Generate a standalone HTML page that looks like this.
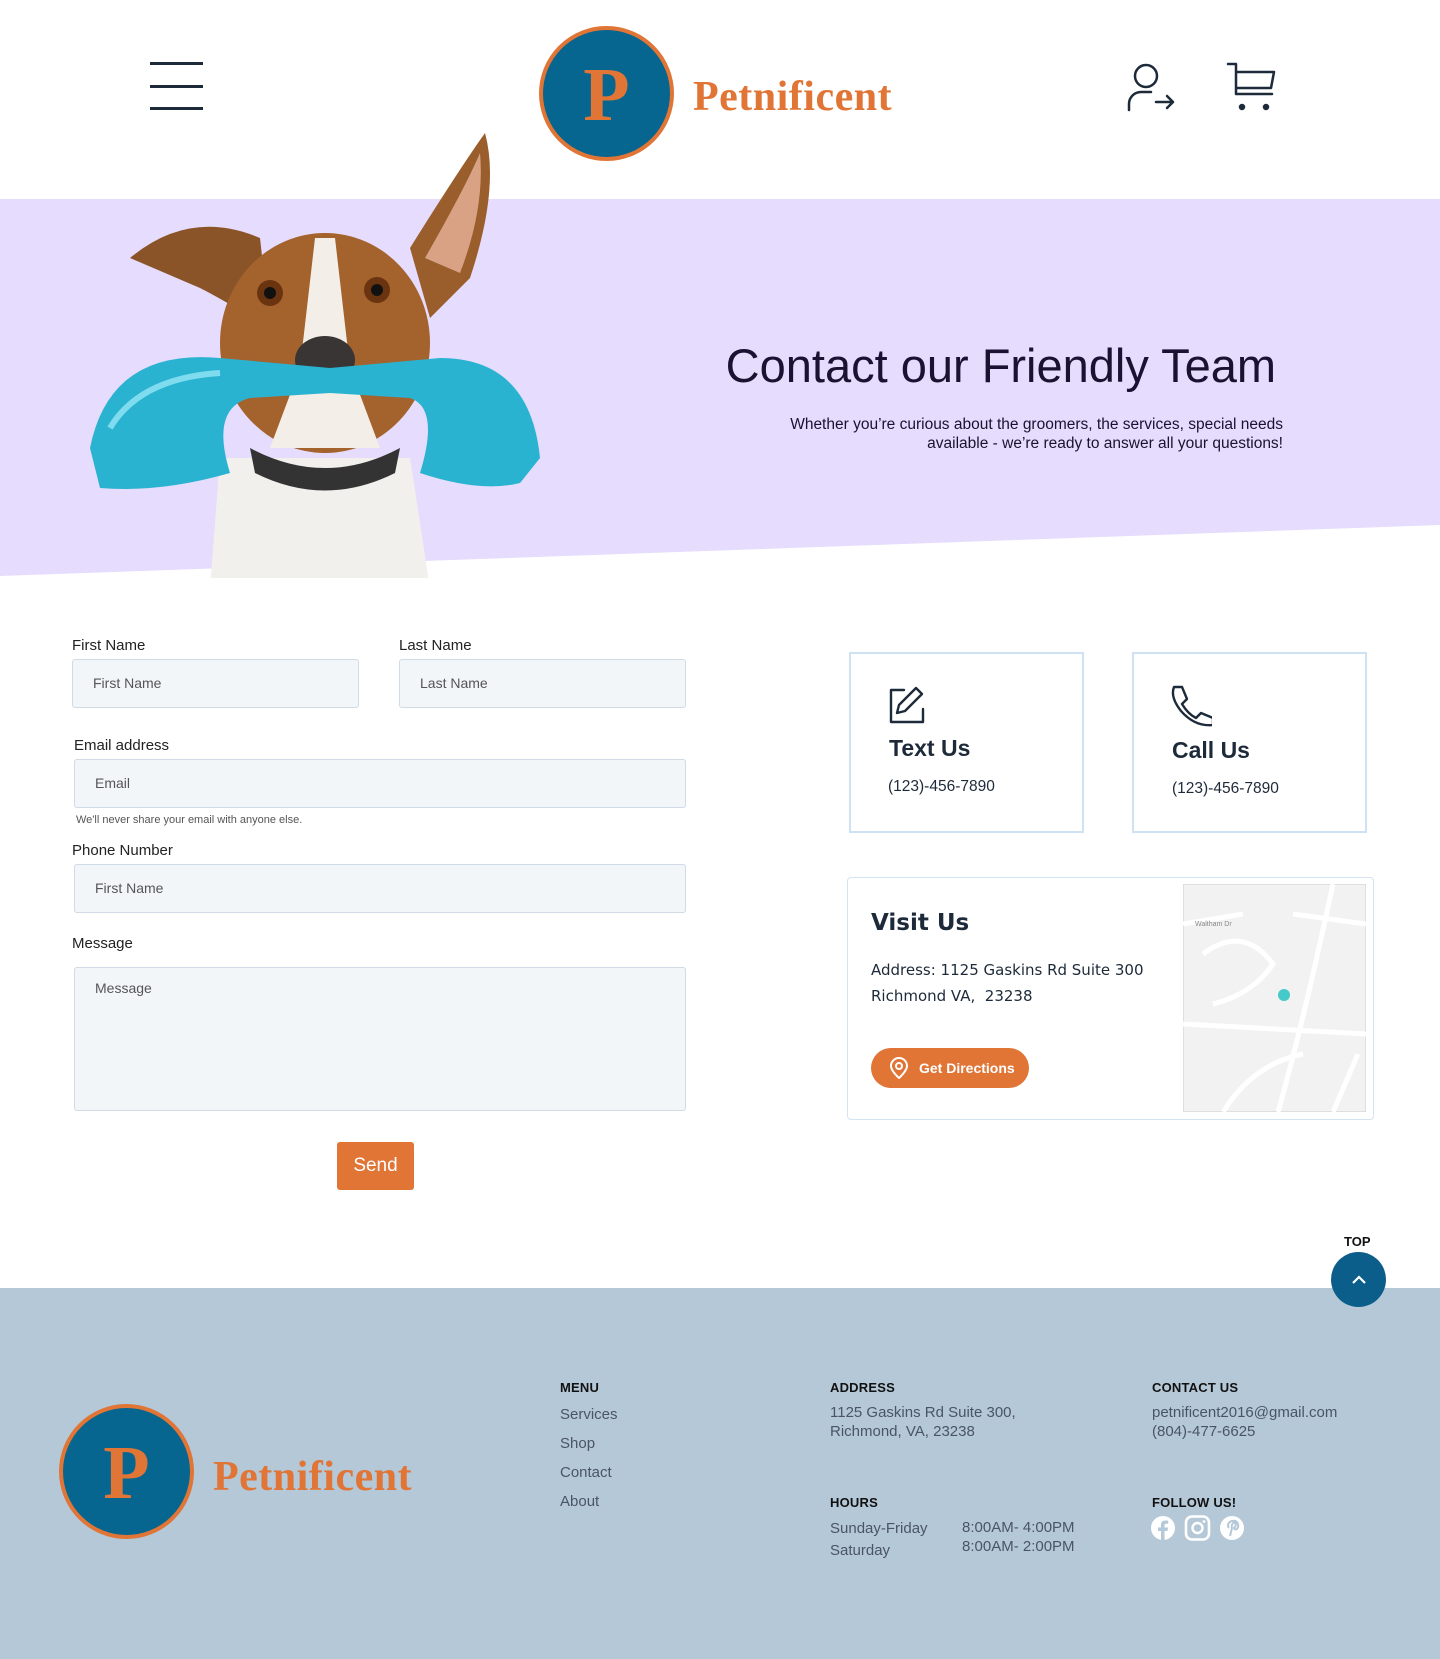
<!DOCTYPE html>
<html><head><meta charset="utf-8"><style>
*{margin:0;padding:0;box-sizing:border-box}
body{width:1440px;height:1659px;position:relative;background:#fff;font-family:"Liberation Sans",sans-serif;overflow:hidden;color:#1d1d2b}
.a{position:absolute}
.lbl{font-size:15px;color:#222}
.inp{position:absolute;background:#f3f6f9;border:1px solid #cfdbe6;border-radius:3px;font-size:14px;color:#555;padding-left:20px;line-height:46px}
.card{position:absolute;border:2px solid #cfe2f3;background:#fff}
.ft{font-size:13px;font-weight:bold;color:#111;letter-spacing:.2px}
.fl{font-size:15px;color:#4a5563}
</style></head><body>
<!-- header -->
<div class="a" style="left:150px;top:62px;width:53px;height:3px;background:#1d2a3a"></div>
<div class="a" style="left:150px;top:85px;width:53px;height:3px;background:#1d2a3a"></div>
<div class="a" style="left:150px;top:107px;width:53px;height:3px;background:#1d2a3a"></div>
<svg class="a" style="left:1126px;top:62px" width="52" height="52" viewBox="0 0 52 52" fill="none" stroke="#1d2a3a" stroke-width="2.5" stroke-linecap="round" stroke-linejoin="round"><circle cx="20" cy="14" r="11"/><path d="M3 48v-6a12 12 0 0 1 12-12h10"/><path d="M30 40h17M41 34l6 6-6 6"/></svg>
<svg class="a" style="left:1226px;top:62px" width="52" height="52" viewBox="0 0 52 52" fill="none" stroke="#1d2a3a" stroke-width="2.5" stroke-linecap="round" stroke-linejoin="round"><path d="M2 2h8v30h36M10 10h38l-3 16H10"/><circle cx="16" cy="45" r="2" fill="#1d2a3a"/><circle cx="40" cy="45" r="2" fill="#1d2a3a"/></svg>
<!-- hero band -->
<svg class="a" style="left:0;top:199px" width="1440" height="380"><polygon points="0,0 1440,0 1440,326 0,377" fill="#e6dcfd"/></svg>
<!-- dog -->
<svg class="a" style="left:80px;top:128px" width="480" height="450" viewBox="0 0 480 450">
<path d="M130 460 L140 330 L330 330 L350 460Z" fill="#f2f0ec"/>
<path d="M50 130 Q110 80 180 110 L190 200 Q140 170 120 160 Z" fill="#8a5428"/>
<path d="M330 120 Q380 40 405 5 Q420 60 390 150 L350 190Z" fill="#9a5e2c"/>
<path d="M345 130 Q385 60 400 25 Q405 80 380 145Z" fill="#d9a284"/>
<ellipse cx="245" cy="215" rx="105" ry="110" fill="#a4622c"/>
<path d="M235 110 L255 110 L270 240 L300 320 L190 320 L220 240Z" fill="#f3efe8"/>
<circle cx="190" cy="165" r="13" fill="#6b3410"/><circle cx="297" cy="162" r="13" fill="#6b3410"/>
<circle cx="190" cy="165" r="6" fill="#111"/><circle cx="297" cy="162" r="6" fill="#111"/>
<ellipse cx="245" cy="232" rx="30" ry="24" fill="#3a3535"/>
<path d="M170 320 Q245 360 320 320 L315 345 Q245 380 175 345Z" fill="#333"/>
<path d="M10 320 Q30 220 140 230 L250 240 L360 230 Q450 230 460 330 L440 355 Q400 365 340 345 Q360 280 330 270 L250 265 L170 270 Q130 280 150 345 Q80 365 20 360Z" fill="#2ab3d1"/>
<path d="M30 300 Q60 250 140 245" stroke="#7fdcef" stroke-width="6" fill="none"/>
</svg>
<div class="a" style="right:164px;top:338px;font-size:47px;color:#1a1230;white-space:nowrap">Contact our Friendly Team</div>
<div class="a" style="right:157px;top:415px;font-size:15.5px;line-height:19px;color:#1a1230;text-align:right;width:500px">Whether you’re curious about the groomers, the services, special needs available - we’re ready to answer all your questions!</div>
<!-- logo -->
<div class="a" style="left:539px;top:26px;width:135px;height:135px;border-radius:50%;background:#06668f;border:4px solid #e07535"></div>
<div class="a" style="left:539px;top:50px;width:135px;text-align:center;font-family:'Liberation Serif',serif;font-weight:bold;font-size:76px;line-height:90px;color:#e07535">P</div>
<div class="a" style="left:693px;top:73px;font-family:'Liberation Serif',serif;font-weight:bold;font-size:42px;color:#e07535;letter-spacing:.5px">Petnificent</div>
<!-- form -->
<div class="a lbl" style="left:72px;top:637px">First Name</div>
<div class="inp" style="left:72px;top:659px;width:287px;height:49px">First Name</div>
<div class="a lbl" style="left:399px;top:637px">Last Name</div>
<div class="inp" style="left:399px;top:659px;width:287px;height:49px">Last Name</div>
<div class="a lbl" style="left:74px;top:737px">Email address</div>
<div class="inp" style="left:74px;top:759px;width:612px;height:49px">Email</div>
<div class="a" style="left:76px;top:814px;font-size:11px;color:#555">We'll never share your email with anyone else.</div>
<div class="a lbl" style="left:72px;top:842px">Phone Number</div>
<div class="inp" style="left:74px;top:864px;width:612px;height:49px">First Name</div>
<div class="a lbl" style="left:72px;top:935px">Message</div>
<div class="inp" style="left:74px;top:967px;width:612px;height:144px;line-height:40px">Message</div>
<div class="a" style="left:337px;top:1142px;width:77px;height:48px;background:#e07535;border-radius:3px;color:#fff;font-size:19px;text-align:center;line-height:48px">Send</div>
<!-- cards -->
<div class="card" style="left:849px;top:652px;width:235px;height:181px"></div>
<svg class="a" style="left:886px;top:685px" width="40" height="40" viewBox="0 0 40 40" fill="none" stroke="#1d2a3a" stroke-width="2.4" stroke-linecap="round" stroke-linejoin="round"><path d="M18 5H5v32h32V24"/><path d="M30 3l6 6-17 17-8 2 2-8z"/></svg>
<div class="a" style="left:889px;top:735px;font-size:23px;font-weight:bold;color:#1d2a3a">Text Us</div>
<div class="a" style="left:888px;top:778px;font-size:15.5px;color:#1d2a3a">(123)-456-7890</div>
<div class="card" style="left:1132px;top:652px;width:235px;height:181px"></div>
<svg class="a" style="left:1170px;top:683px" width="42" height="44" viewBox="0 0 42 44" fill="none" stroke="#1d2a3a" stroke-width="2.4" stroke-linecap="round" stroke-linejoin="round"><path d="M4 4h8l5 12-5 5q6 10 14 14l5-5 12 5v7q-18 2-32-14Q0 14 4 4z"/></svg>
<div class="a" style="left:1172px;top:737px;font-size:23px;font-weight:bold;color:#1d2a3a">Call Us</div>
<div class="a" style="left:1172px;top:780px;font-size:15.5px;color:#1d2a3a">(123)-456-7890</div>
<div class="a" style="left:847px;top:877px;width:527px;height:243px;border:1.5px solid #d4e3f1;border-radius:4px"></div>
<div class="a" style="left:871px;top:910px;font-family:'DejaVu Sans',sans-serif;font-weight:bold;font-size:23px;color:#1d2a3a">Visit Us</div>
<div class="a" style="left:871px;top:957px;font-family:'DejaVu Sans',sans-serif;font-size:15px;line-height:26px;color:#1d2a3a">Address: 1125 Gaskins Rd Suite 300<br>Richmond VA,&nbsp; 23238</div>
<div class="a" style="left:871px;top:1048px;width:158px;height:40px;border-radius:20px;background:#e07535;color:#fff;font-size:14px;font-weight:bold;line-height:40px;padding-left:48px">Get Directions</div>
<svg class="a" style="left:888px;top:1057px" width="22" height="22" viewBox="0 0 22 22" fill="none" stroke="#fff" stroke-width="2"><path d="M11 21s-8-7-8-12a8 8 0 0 1 16 0c0 5-8 12-8 12z"/><circle cx="11" cy="9" r="3"/></svg>
<svg class="a" style="left:1183px;top:884px" width="183" height="228" viewBox="0 0 183 228"><rect width="183" height="228" fill="#f2f2f2" stroke="#ccc"/><g stroke="#fff" stroke-width="5" fill="none"><path d="M0 140 L183 150"/><path d="M95 228 Q120 140 150 0"/><path d="M20 70 Q60 40 90 80 Q70 110 30 120"/><path d="M110 30 L183 40"/><path d="M40 228 Q70 180 120 170"/><path d="M0 40 L60 30"/><path d="M150 228 L175 170"/></g><circle cx="101" cy="111" r="6" fill="#46c9c9"/><text x="12" y="42" font-size="7" fill="#888" font-family="Liberation Sans">Waltham Dr</text></svg>
<!-- footer -->
<div class="a" style="left:0;top:1288px;width:1440px;height:371px;background:#b5c8d8"></div>
<div class="a" style="left:1344px;top:1234px;font-size:13px;font-weight:bold;color:#111">TOP</div>
<div class="a" style="left:1331px;top:1252px;width:55px;height:55px;border-radius:50%;background:#0b5e8a"></div>
<svg class="a" style="left:1349px;top:1270px" width="20" height="20" viewBox="0 0 20 20" fill="none" stroke="#fff" stroke-width="2.2"><path d="M4 13l6-6 6 6"/></svg>
<div class="a" style="left:59px;top:1404px;width:135px;height:135px;border-radius:50%;background:#06668f;border:4px solid #e07535"></div>
<div class="a" style="left:59px;top:1428px;width:135px;text-align:center;font-family:'Liberation Serif',serif;font-weight:bold;font-size:76px;line-height:90px;color:#e07535">P</div>
<div class="a" style="left:213px;top:1453px;font-family:'Liberation Serif',serif;font-weight:bold;font-size:42px;color:#e07535;letter-spacing:.5px">Petnificent</div>
<div class="a ft" style="left:560px;top:1380px">MENU</div>
<div class="a fl" style="left:560px;top:1400px;line-height:29px">Services<br>Shop<br>Contact<br>About</div>
<div class="a ft" style="left:830px;top:1380px">ADDRESS</div>
<div class="a fl" style="left:830px;top:1403px;line-height:19px">1125 Gaskins Rd Suite 300,<br>Richmond, VA, 23238</div>
<div class="a ft" style="left:830px;top:1495px">HOURS</div>
<div class="a fl" style="left:830px;top:1518px;line-height:22px">Sunday-Friday<br>Saturday</div>
<div class="a fl" style="left:962px;top:1518px;line-height:19px">8:00AM- 4:00PM<br>8:00AM- 2:00PM</div>
<div class="a ft" style="left:1152px;top:1380px">CONTACT US</div>
<div class="a fl" style="left:1152px;top:1403px;line-height:19px">petnificent2016@gmail.com<br>(804)-477-6625</div>
<div class="a ft" style="left:1152px;top:1495px">FOLLOW US!</div>
<svg class="a" style="left:1151px;top:1515px" width="95" height="26" viewBox="0 0 95 26"><circle cx="12" cy="13" r="12" fill="#fff"/><path d="M13.5 25v-9h3l.5-3.5h-3.5v-2c0-1 .3-1.7 1.8-1.7h1.9V5.6c-.3 0-1.5-.1-2.8-.1-2.7 0-4.5 1.6-4.5 4.6v2.4H7V16h3v9z" fill="#b5c8d8"/><rect x="35" y="1.5" width="23" height="23" rx="6" fill="none" stroke="#fff" stroke-width="2.6"/><circle cx="46.5" cy="13" r="5" fill="none" stroke="#fff" stroke-width="2.4"/><circle cx="53" cy="6.5" r="1.4" fill="#fff"/><circle cx="81" cy="13" r="12" fill="#fff"/><path d="M79 21l2-8m0 0c-1-3 1-6 3-5 2 1 0 4-1 5 0 2 3 2 4-1 1-4-2-7-6-6-4 1-5 5-3 7" stroke="#b5c8d8" stroke-width="2" fill="none"/></svg>
</body></html>
